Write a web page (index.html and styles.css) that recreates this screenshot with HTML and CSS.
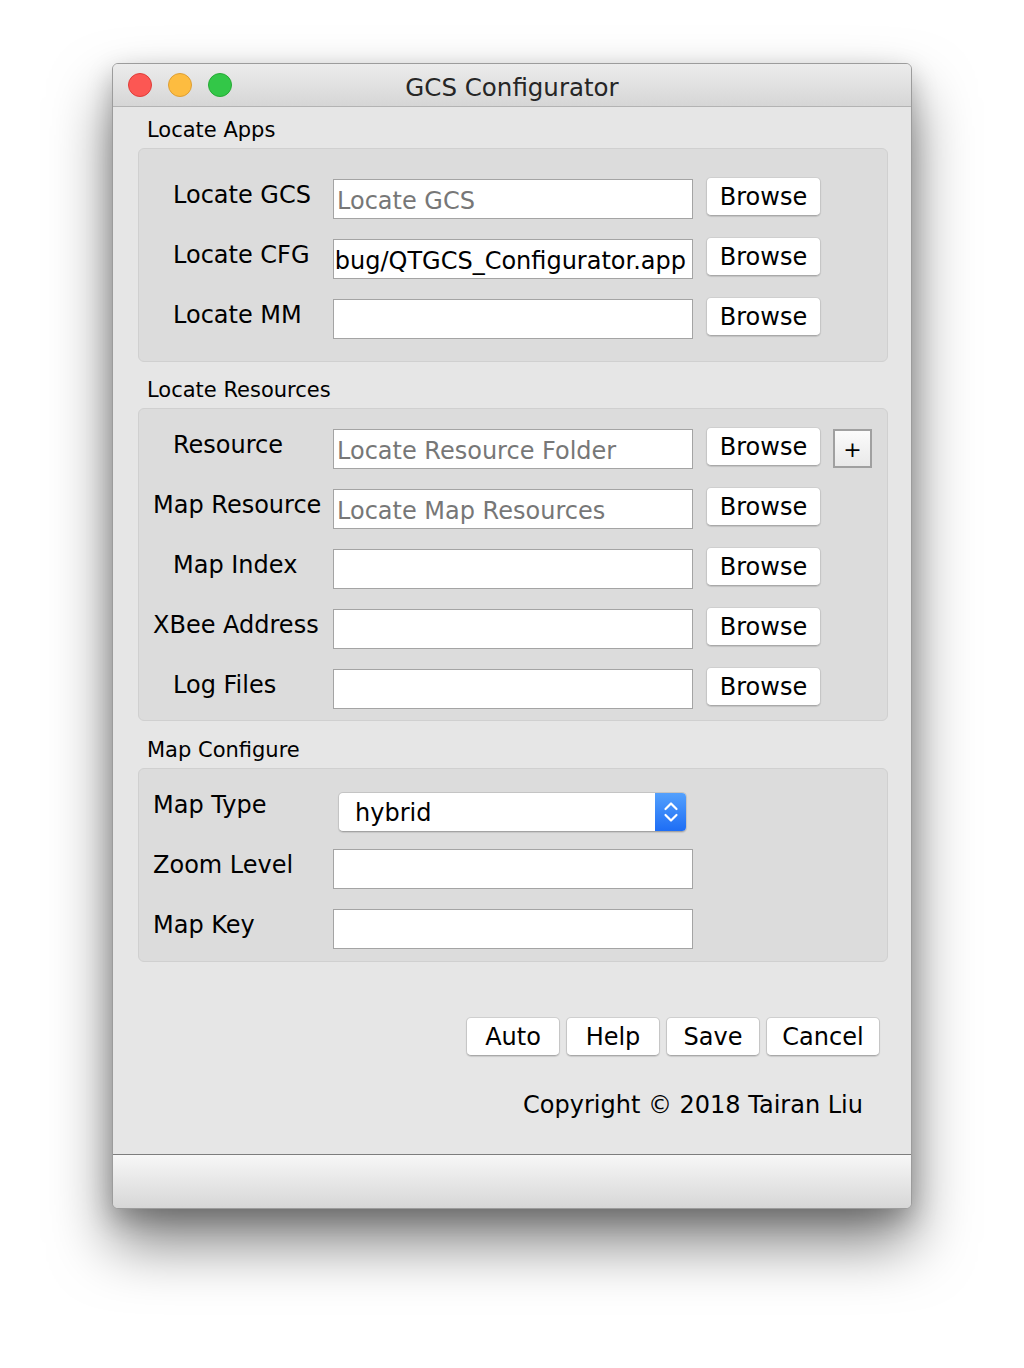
FILE: index.html
```html
<!DOCTYPE html>
<html>
<head>
<meta charset="utf-8">
<title>GCS Configurator</title>
<link rel="stylesheet" href="styles.css">
</head>
<body>
<div class="desktop">
  <div class="window">
    <div class="titlebar">
      <div class="lights">
        <span class="light red"></span>
        <span class="light yellow"></span>
        <span class="light green"></span>
      </div>
      <div class="title">GCS Configurator</div>
      <div></div>
    </div>
    <div class="content">
      <div class="section-title first">Locate Apps</div>
      <div class="group g1">
        <div class="row">
          <div class="label">Locate GCS</div>
          <div class="field placeholder">Locate GCS</div>
          <div class="btn browse">Browse</div>
        </div>
        <div class="row">
          <div class="label">Locate CFG</div>
          <div class="field scrolled"><span>bug/QTGCS_Configurator.app</span></div>
          <div class="btn browse">Browse</div>
        </div>
        <div class="row">
          <div class="label">Locate MM</div>
          <div class="field"></div>
          <div class="btn browse">Browse</div>
        </div>
      </div>

      <div class="section-title">Locate Resources</div>
      <div class="group g2">
        <div class="row">
          <div class="label">Resource</div>
          <div class="field placeholder">Locate Resource Folder</div>
          <div class="btn browse">Browse</div>
          <div class="plus">+</div>
        </div>
        <div class="row">
          <div class="label wide">Map Resource</div>
          <div class="field placeholder">Locate Map Resources</div>
          <div class="btn browse">Browse</div>
        </div>
        <div class="row">
          <div class="label">Map Index</div>
          <div class="field"></div>
          <div class="btn browse">Browse</div>
        </div>
        <div class="row">
          <div class="label wide">XBee Address</div>
          <div class="field"></div>
          <div class="btn browse">Browse</div>
        </div>
        <div class="row">
          <div class="label">Log Files</div>
          <div class="field"></div>
          <div class="btn browse">Browse</div>
        </div>
      </div>

      <div class="section-title third">Map Configure</div>
      <div class="group g3">
        <div class="row">
          <div class="label wide">Map Type</div>
          <div class="combo">
            <span class="combo-text">hybrid</span>
            <span class="stepper">
              <svg width="32" height="40" viewBox="0 0 32 40">
                <path d="M10.5 17 L16 11.5 L21.5 17" fill="none" stroke="#fff" stroke-width="2.2" stroke-linecap="round" stroke-linejoin="round"/>
                <path d="M10.5 23 L16 28.5 L21.5 23" fill="none" stroke="#fff" stroke-width="2.2" stroke-linecap="round" stroke-linejoin="round"/>
              </svg>
            </span>
          </div>
        </div>
        <div class="row">
          <div class="label wide">Zoom Level</div>
          <div class="field"></div>
        </div>
        <div class="row">
          <div class="label wide">Map Key</div>
          <div class="field"></div>
        </div>
      </div>

      <div class="actions">
        <div class="btn act">Auto</div>
        <div class="btn act">Help</div>
        <div class="btn act">Save</div>
        <div class="btn act cancel">Cancel</div>
      </div>
      <div class="copyright">Copyright © 2018 Tairan Liu</div>
    </div>
    <div class="statusbar"></div>
  </div>
</div>
</body>
</html>
```

FILE: styles.css
```css
* { box-sizing: border-box; }

html, body {
  margin: 0;
  padding: 0;
  background: #ffffff;
}

body {
  font-family: "DejaVu Sans", "Liberation Sans", sans-serif;
  color: #000;
}

.desktop {
  padding: 63px 0 0 112px;
  width: 1024px;
  height: 1368px;
  overflow: hidden;
}

.window {
  width: 800px;
  border: 1px solid #9c9c9c;
  border-radius: 6px;
  overflow: hidden;
  background: #e6e6e6;
  box-shadow: 0 34px 60px rgba(0, 0, 0, 0.5), 0 10px 26px rgba(0, 0, 0, 0.22);
}

.titlebar {
  height: 43px;
  display: grid;
  grid-template-columns: 1fr auto 1fr;
  align-items: center;
  background: linear-gradient(#ececec, #d6d6d6);
  border-bottom: 1px solid #b3b3b3;
}

.lights {
  display: flex;
  gap: 16px;
  padding-left: 15px;
}

.light {
  width: 24px;
  height: 24px;
  border-radius: 50%;
  display: block;
}
.red { background: #fc5753; border: 1px solid #df3d39; }
.yellow { background: #fdbc40; border: 1px solid #de9f34; }
.green { background: #33c748; border: 1px solid #27aa35; }

.title {
  font-size: 24.5px;
  color: #262626;
  padding-top: 5px;
}

.content {
  padding: 10px 23px 0 25px;
  border-bottom: 1px solid #7d7d7d;
}

.section-title {
  font-size: 21px;
  line-height: 26px;
  height: 24px;
  margin: 15px 0 7px 9px;
}
.section-title.first { margin-top: 0; }
.section-title.third { margin-top: 16px; }

.group {
  background: #dcdcdc;
  border: 1px solid #d0d0d0;
  border-radius: 6px;
  display: flex;
  flex-direction: column;
  gap: 20px;
}
.g1 { padding: 30px 0 22px; }
.g2 { padding: 20px 0 11px; }
.g3 { padding: 20px 0 12px; }

.row {
  display: flex;
  align-items: flex-start;
  height: 40px;
}

.label {
  width: 194px;
  flex: none;
  font-size: 24px;
  line-height: 33px;
  height: 40px;
  padding-left: 34px;
  white-space: nowrap;
}
.label.wide { padding-left: 14px; }

.field {
  width: 360px;
  height: 40px;
  flex: none;
  background: #fff;
  border: 1px solid #a4a4a4;
  font-size: 24px;
  line-height: 38px;
  padding: 2px 0 0 3px;
  white-space: nowrap;
  overflow: hidden;
}
.placeholder { color: #777777; }
.scrolled {
  display: flex;
  justify-content: flex-end;
  padding: 2px 6px 0 0;
}
.scrolled span { flex: none; }

.btn {
  background: #ffffff;
  border-radius: 5px;
  border: 1px solid #c6c6c6;
  border-top-color: #cfcfcf;
  border-bottom-color: #a9a9a9;
  box-shadow: 0 1px 1px rgba(0, 0, 0, 0.12);
  font-size: 24px;
  height: 39px;
  line-height: 38px;
  text-align: center;
  flex: none;
}

.browse {
  width: 115px;
  margin: -2px 0 0 13px;
}

.plus {
  width: 39px;
  height: 39px;
  margin-left: 12px;
  border: 2px solid #a0a0a0;
  background: linear-gradient(#fbfbfb, #e9e9e9);
  font-size: 22px;
  line-height: 38px;
  text-align: center;
  flex: none;
}

.combo {
  width: 349px;
  height: 40px;
  margin: 3px 0 0 5px;
  flex: none;
  display: flex;
  background: #fff;
  border-radius: 5px;
  border: 1px solid #c4c4c4;
  border-bottom-color: #a3a3a3;
  box-shadow: 0 1px 1px rgba(0, 0, 0, 0.1);
  overflow: hidden;
}
.combo-text {
  flex: 1;
  font-size: 24px;
  line-height: 40px;
  padding-left: 16px;
}
.stepper {
  width: 32px;
  flex: none;
  background: linear-gradient(#55a2fd, #1c6cf5);
  display: flex;
  align-items: center;
  justify-content: center;
  margin: -1px -1px -1px 0;
}
.stepper svg { display: block; }

.actions {
  display: flex;
  justify-content: flex-end;
  gap: 6px;
  margin-top: 55px;
  padding-right: 8px;
}
.act { width: 94px; }
.act.cancel { width: 114px; }

.copyright {
  font-size: 24px;
  line-height: 30px;
  text-align: right;
  margin-top: 34px;
  padding-right: 25px;
  padding-bottom: 34px;
}

.statusbar {
  height: 53px;
  background: linear-gradient(#f7f7f7, #d7d7d7);
}
```
